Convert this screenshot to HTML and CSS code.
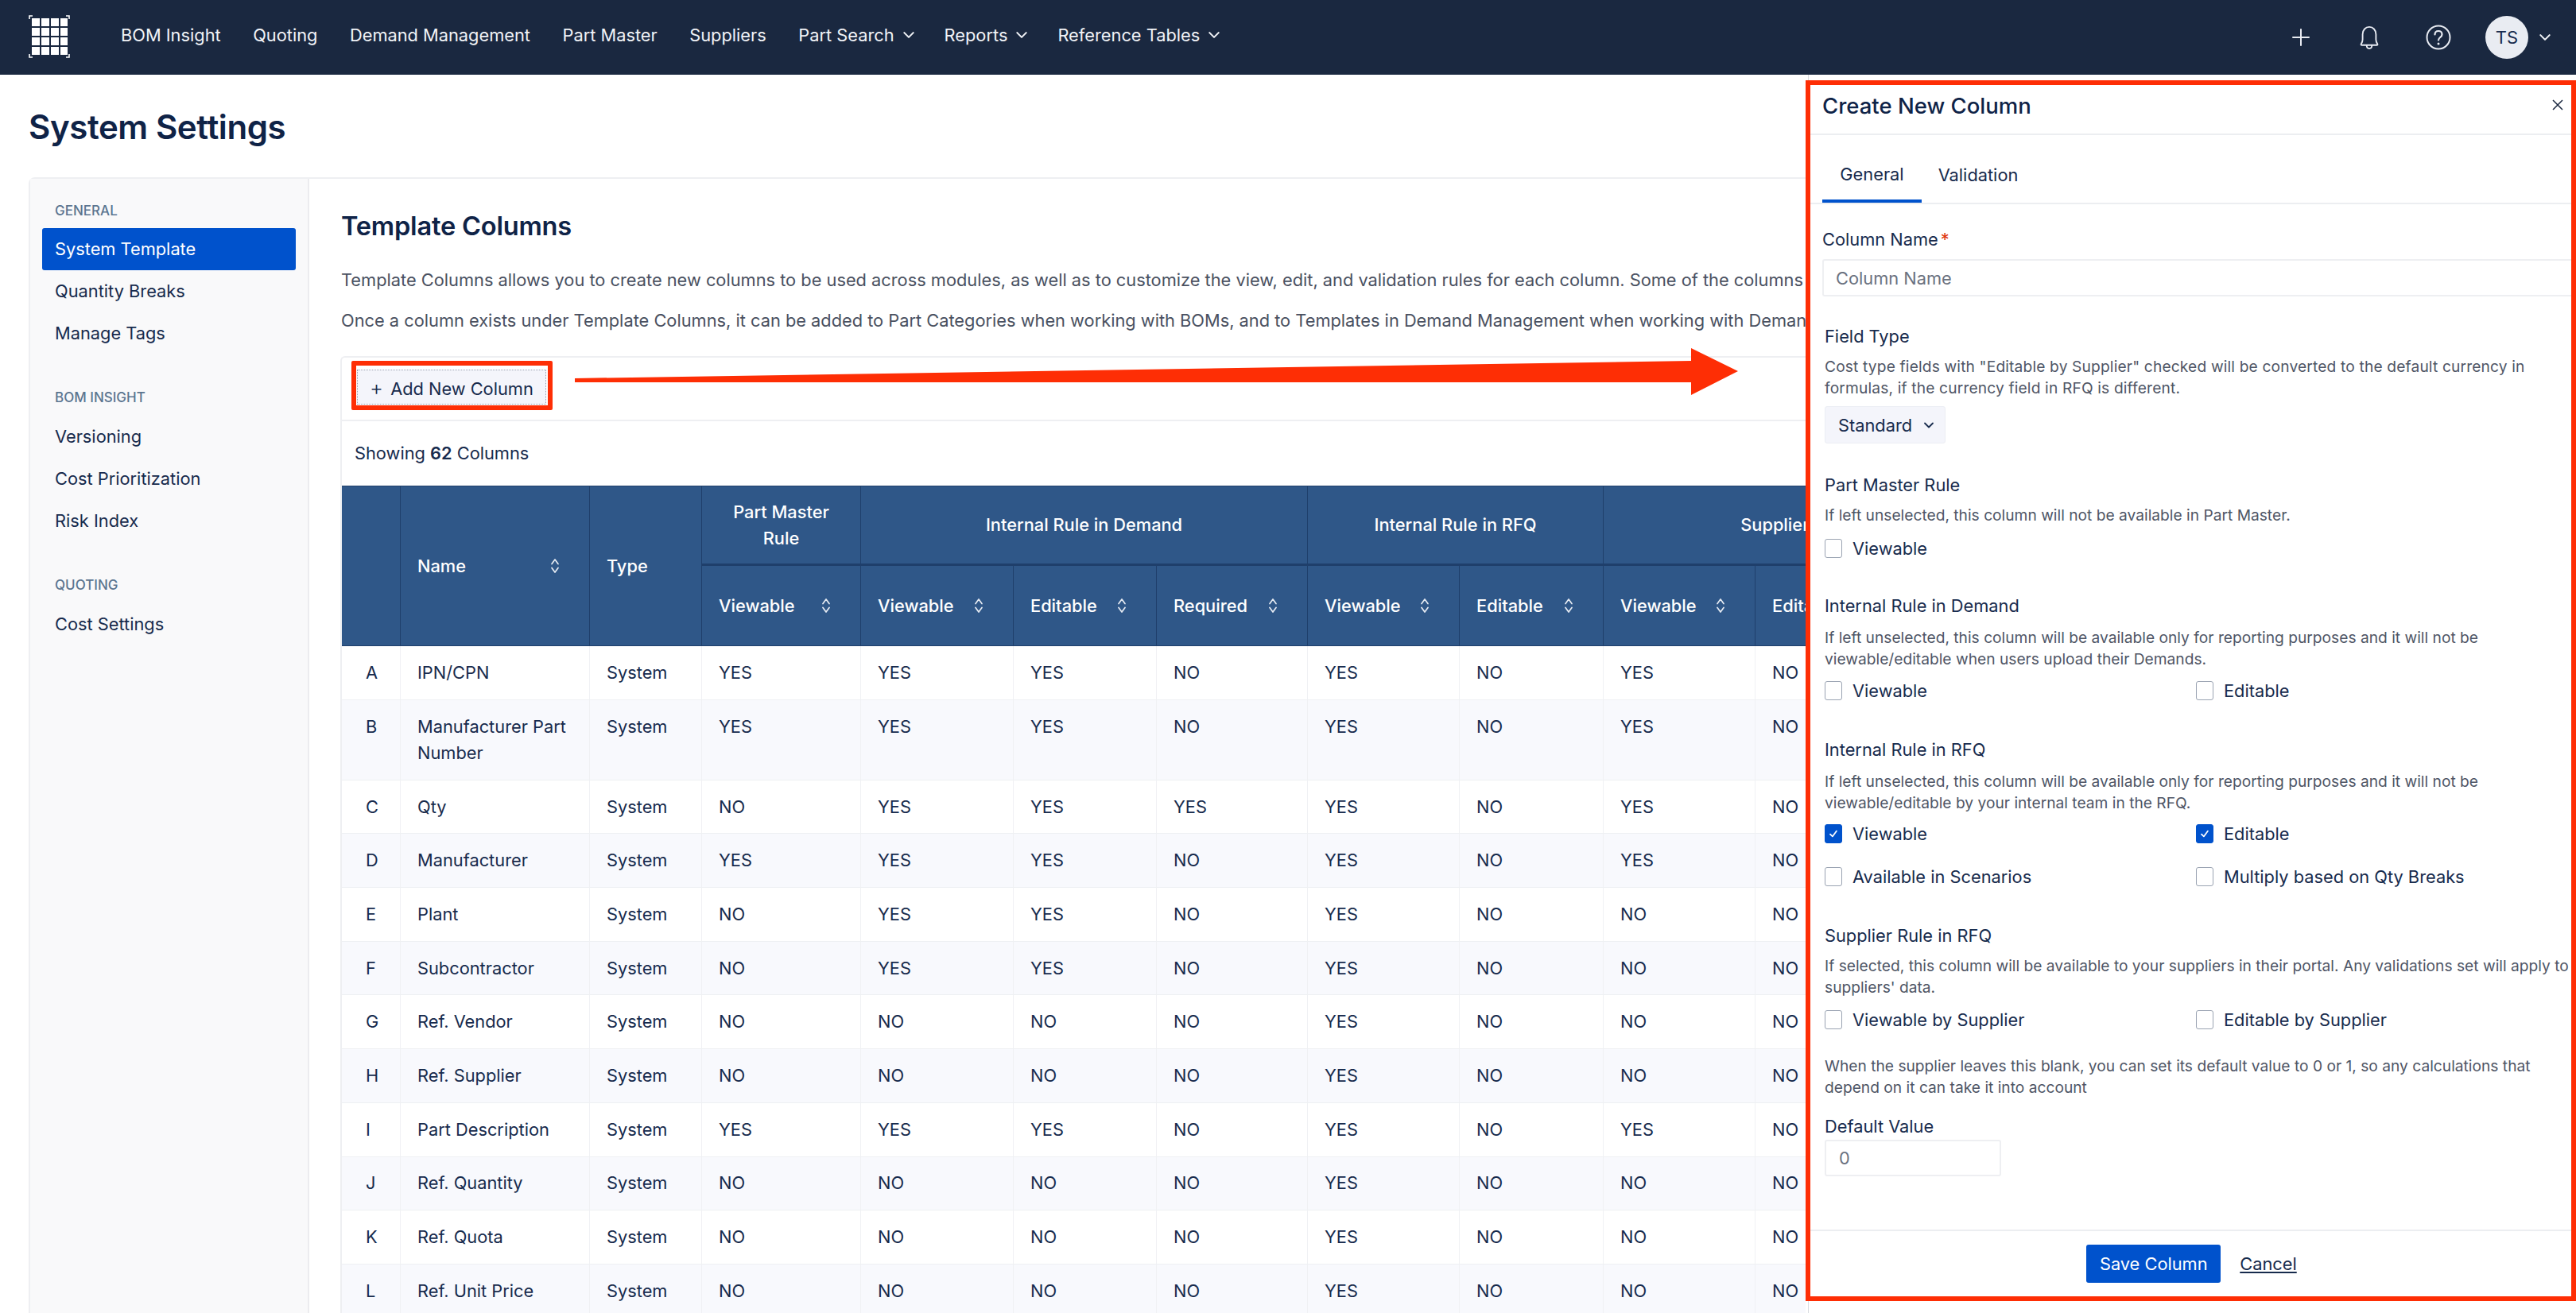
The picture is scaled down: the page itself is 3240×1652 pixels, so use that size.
FILE: index.html
```html
<!DOCTYPE html>
<html lang="en">
<head>
<meta charset="utf-8">
<title>System Settings</title>
<link rel="stylesheet" href="styles.css">
</head>
<body>
<svg class="defs" width="0" height="0" aria-hidden="true">
  <symbol id="sort" viewBox="0 0 14 20"><path d="M3 7.5 7 2l4 5.5M3 12.5 7 18l4-5.5" fill="none" stroke="currentColor" stroke-width="1.7" stroke-linecap="round" stroke-linejoin="round"/></symbol>
  <symbol id="chev" viewBox="0 0 14 10"><path d="M2 2.5 7 7.5l5-5" fill="none" stroke="currentColor" stroke-width="1.8" stroke-linecap="round" stroke-linejoin="round"/></symbol>
  <symbol id="tick" viewBox="0 0 14 14"><path d="M3.5 7.5 6 10l4.5-6" fill="none" stroke="#fff" stroke-width="1.5" stroke-linecap="round" stroke-linejoin="round"/></symbol>
</svg>
<header class="nav">
  <svg class="logo" viewBox="0 0 52 54" aria-label="logo">
    <path d="M1 5V1h4M47 1h4v4M1 49v4h4M47 53h4v-4" fill="none" stroke="#fff" stroke-width="1.6"/>
    <g fill="#fff">
      <rect x="4" y="4" width="10" height="10"/><rect x="16" y="4" width="10" height="10"/><rect x="28" y="4" width="10" height="10"/><rect x="40" y="4" width="9" height="10"/>
      <rect x="4" y="16" width="10" height="10"/><rect x="16" y="16" width="10" height="10"/><rect x="28" y="16" width="10" height="10"/><rect x="40" y="16" width="9" height="10"/>
      <rect x="4" y="28" width="10" height="10"/><rect x="16" y="28" width="10" height="10"/><rect x="28" y="28" width="10" height="10"/><rect x="40" y="28" width="9" height="10"/>
      <rect x="4" y="40" width="10" height="10"/><rect x="16" y="40" width="10" height="10"/><rect x="28" y="40" width="10" height="10"/><rect x="40" y="40" width="9" height="10"/>
    </g>
  </svg>
  <nav class="nav-links">
    <a>BOM Insight</a><a>Quoting</a><a>Demand Management</a><a>Part Master</a><a>Suppliers</a>
    <a class="has-chev">Part Search <svg class="chev"><use href="#chev"/></svg></a>
    <a class="has-chev">Reports <svg class="chev"><use href="#chev"/></svg></a>
    <a class="has-chev">Reference Tables <svg class="chev"><use href="#chev"/></svg></a>
  </nav>
  <div class="nav-right">
    <svg class="nav-ico" viewBox="0 0 24 24"><path d="M12 2v20M2 12h20" fill="none" stroke="#e8ebf2" stroke-width="2" stroke-linecap="round"/></svg>
    <svg class="nav-ico ico-bell" viewBox="0 0 30 32"><path d="M4 25c1.500-2 2-3 2-6v-7c0-6 4-10 9-10s9 4 9 10v7c0 3 .5 4 2 6 .5 1 0 1.500-1 1.500H5c-1 0-1.500-.5-1-1.500ZM11.500 27c0 2.500 1.500 4 3.500 4s3.500-1.500 3.500-4" fill="none" stroke="#e8ebf2" stroke-width="2"/></svg>
    <svg class="nav-ico ico-help" viewBox="0 0 32 32"><circle cx="16" cy="16" r="14.500" fill="none" stroke="#e8ebf2" stroke-width="2"/><path d="M11.500 12.500c0-3 2-4.500 4.500-4.500s4.500 1.700 4.500 4.300c0 3.700-4.500 3.700-4.500 7.200" fill="none" stroke="#e8ebf2" stroke-width="2.200" stroke-linecap="round"/><circle cx="16" cy="24" r="1.500" fill="#e8ebf2"/></svg>
    <div class="avatar-wrap">
      <span class="avatar">TS</span>
      <svg class="chev avatar-chev"><use href="#chev"/></svg>
    </div>
  </div>
</header>

<main class="page">
  <h1 class="page-title">System Settings</h1>
  <div class="panel">
    <aside class="side">
      <h6 class="side-h">GENERAL</h6>
      <a class="side-a active">System Template</a>
      <a class="side-a">Quantity Breaks</a>
      <a class="side-a">Manage Tags</a>
      <h6 class="side-h next">BOM INSIGHT</h6>
      <a class="side-a">Versioning</a>
      <a class="side-a">Cost Prioritization</a>
      <a class="side-a">Risk Index</a>
      <h6 class="side-h next">QUOTING</h6>
      <a class="side-a">Cost Settings</a>
    </aside>
    <section class="content">
      <h2 class="content-title">Template Columns</h2>
      <p class="lead">Template Columns allows you to create new columns to be used across modules, as well as to customize the view, edit, and validation rules for each column. Some of the columns</p>
      <p class="lead second">Once a column exists under Template Columns, it can be added to Part Categories when working with BOMs, and to Templates in Demand Management when working with Demands.</p>
      <div class="card">
        <div class="toolbar"><button class="add-btn"><span class="plus">+</span> Add New Column</button></div>
        <div class="showing">Showing <b>62</b> Columns</div>
        <table class="grid">
          <colgroup>
            <col class="c-idx"><col class="c-name"><col class="c-type"><col class="c-pm"><col class="c-dv"><col class="c-de"><col class="c-dr"><col class="c-rv"><col class="c-re"><col class="c-sv"><col class="c-se">
          </colgroup>
          <thead>
            <tr>
              <th rowspan="2"></th>
              <th rowspan="2"><span class="th-s">Name<svg class="sort"><use href="#sort"/></svg></span></th>
              <th rowspan="2"><span class="th-s">Type</span></th>
              <th class="grp">Part Master<br>Rule</th>
              <th class="grp" colspan="3">Internal Rule in Demand</th>
              <th class="grp" colspan="2">Internal Rule in RFQ</th>
              <th class="grp" colspan="2">Supplier Rule in RFQ</th>
            </tr>
            <tr class="sub">
              <th><span class="th-s">Viewable<svg class="sort"><use href="#sort"/></svg></span></th>
              <th><span class="th-s">Viewable<svg class="sort"><use href="#sort"/></svg></span></th>
              <th><span class="th-s">Editable<svg class="sort"><use href="#sort"/></svg></span></th>
              <th><span class="th-s">Required<svg class="sort"><use href="#sort"/></svg></span></th>
              <th><span class="th-s">Viewable<svg class="sort"><use href="#sort"/></svg></span></th>
              <th><span class="th-s">Editable<svg class="sort"><use href="#sort"/></svg></span></th>
              <th><span class="th-s">Viewable<svg class="sort"><use href="#sort"/></svg></span></th>
              <th><span class="th-s">Editable</span></th>
            </tr>
          </thead>
          <tbody>
            <tr><td class="idx">A</td><td>IPN/CPN</td><td>System</td><td>YES</td><td>YES</td><td>YES</td><td>NO</td><td>YES</td><td>NO</td><td>YES</td><td>NO</td></tr>
            <tr class="tall"><td class="idx">B</td><td>Manufacturer Part Number</td><td>System</td><td>YES</td><td>YES</td><td>YES</td><td>NO</td><td>YES</td><td>NO</td><td>YES</td><td>NO</td></tr>
            <tr><td class="idx">C</td><td>Qty</td><td>System</td><td>NO</td><td>YES</td><td>YES</td><td>YES</td><td>YES</td><td>NO</td><td>YES</td><td>NO</td></tr>
            <tr><td class="idx">D</td><td>Manufacturer</td><td>System</td><td>YES</td><td>YES</td><td>YES</td><td>NO</td><td>YES</td><td>NO</td><td>YES</td><td>NO</td></tr>
            <tr><td class="idx">E</td><td>Plant</td><td>System</td><td>NO</td><td>YES</td><td>YES</td><td>NO</td><td>YES</td><td>NO</td><td>NO</td><td>NO</td></tr>
            <tr><td class="idx">F</td><td>Subcontractor</td><td>System</td><td>NO</td><td>YES</td><td>YES</td><td>NO</td><td>YES</td><td>NO</td><td>NO</td><td>NO</td></tr>
            <tr><td class="idx">G</td><td>Ref. Vendor</td><td>System</td><td>NO</td><td>NO</td><td>NO</td><td>NO</td><td>YES</td><td>NO</td><td>NO</td><td>NO</td></tr>
            <tr><td class="idx">H</td><td>Ref. Supplier</td><td>System</td><td>NO</td><td>NO</td><td>NO</td><td>NO</td><td>YES</td><td>NO</td><td>NO</td><td>NO</td></tr>
            <tr><td class="idx">I</td><td>Part Description</td><td>System</td><td>YES</td><td>YES</td><td>YES</td><td>NO</td><td>YES</td><td>NO</td><td>YES</td><td>NO</td></tr>
            <tr><td class="idx">J</td><td>Ref. Quantity</td><td>System</td><td>NO</td><td>NO</td><td>NO</td><td>NO</td><td>YES</td><td>NO</td><td>NO</td><td>NO</td></tr>
            <tr><td class="idx">K</td><td>Ref. Quota</td><td>System</td><td>NO</td><td>NO</td><td>NO</td><td>NO</td><td>YES</td><td>NO</td><td>NO</td><td>NO</td></tr>
            <tr><td class="idx">L</td><td>Ref. Unit Price</td><td>System</td><td>NO</td><td>NO</td><td>NO</td><td>NO</td><td>YES</td><td>NO</td><td>NO</td><td>NO</td></tr>
          </tbody>
        </table>
      </div>
    </section>
  </div>
</main>

<div class="mark-btn"></div>
<svg class="mark-arrow" viewBox="0 0 1470 70"><polygon points="0,43 0,38 1404,16 1404,0 1463,29 1404,59 1404,43" fill="#fe2e05"/></svg>

<div class="drawer-edge"></div>
<aside class="drawer">
  <div class="d-head"><h3 class="d-title">Create New Column</h3><svg class="d-close" viewBox="0 0 14 14"><path d="M1 1l12 12M13 1 1 13" fill="none" stroke="#1a2840" stroke-width="1.500"/></svg></div>
  <div class="tabs"><a class="tab on">General</a><a class="tab">Validation</a></div>
  <div class="d-body">
    <label class="lbl">Column Name<span class="req">*</span></label>
    <div class="inp">Column Name</div>

    <div class="sec sec-type">
      <div class="sec-h">Field Type</div>
      <p class="help">Cost type fields with "Editable by Supplier" checked will be converted to the default currency in formulas, if the currency field in RFQ is different.</p>
      <div class="sel">Standard <svg class="chev sel-chev"><use href="#chev"/></svg></div>
    </div>

    <div class="sec s-pm">
      <div class="sec-h">Part Master Rule</div>
      <p class="help">If left unselected, this column will not be available in Part Master.</p>
      <div class="checks"><div class="ck"><i class="box"></i>Viewable</div></div>
    </div>

    <div class="sec s-dem">
      <div class="sec-h">Internal Rule in Demand</div>
      <p class="help">If left unselected, this column will be available only for reporting purposes and it will not be viewable/editable when users upload their Demands.</p>
      <div class="checks"><div class="ck"><i class="box"></i>Viewable</div><div class="ck"><i class="box"></i>Editable</div></div>
    </div>

    <div class="sec s-rfq">
      <div class="sec-h">Internal Rule in RFQ</div>
      <p class="help">If left unselected, this column will be available only for reporting purposes and it will not be viewable/editable by your internal team in the RFQ.</p>
      <div class="checks">
        <div class="ck"><i class="box on"><svg class="tick"><use href="#tick"/></svg></i>Viewable</div>
        <div class="ck"><i class="box on"><svg class="tick"><use href="#tick"/></svg></i>Editable</div>
        <div class="ck"><i class="box"></i>Available in Scenarios</div>
        <div class="ck"><i class="box"></i>Multiply based on Qty Breaks</div>
      </div>
    </div>

    <div class="sec s-sup">
      <div class="sec-h">Supplier Rule in RFQ</div>
      <p class="help wide">If selected, this column will be available to your suppliers in their portal. Any validations set will apply to suppliers' data.</p>
      <div class="checks"><div class="ck"><i class="box"></i>Viewable by Supplier</div><div class="ck"><i class="box"></i>Editable by Supplier</div></div>
      <p class="help note">When the supplier leaves this blank, you can set its default value to 0 or 1, so any calculations that depend on it can take it into account</p>
      <div class="sec-h dv">Default Value</div>
      <div class="inp small">0</div>
    </div>
  </div>
  <div class="d-foot"><button class="save">Save Column</button><a class="cancel">Cancel</a></div>
</aside>
</body>
</html>
```
FILE: styles.css
```css
* { box-sizing: border-box; }
html, body { margin: 0; height: 100%; }
body {
  width: 3240px; height: 1652px; overflow: hidden; position: relative; background: #fff;
  font-family: Inter, "Liberation Sans", sans-serif; color: #172b4d; font-size: 21.8px;
}
.defs { position: absolute; }
h1, h2, h3, h6, p { margin: 0; }

/* nav */
.nav { height: 94px; background: #1a2840; display: flex; align-items: center; padding: 0 31px 0 36px; color: #f1f3f7; }
.logo { width: 52px; height: 54px; margin: 0 64px 3px 0; flex: none; }
.nav-links { display: flex; align-items: center; gap: 40.5px; font-size: 21.8px; white-space: nowrap; margin-bottom: 6px; }
.nav-links a { display: flex; align-items: center; gap: 10px; }
.nav-links a.has-chev { margin-right: -3.5px; }
.chev { width: 16px; height: 12px; }
.nav-right { margin-left: auto; display: flex; align-items: center; gap: 60px; }
.nav-ico { width: 24px; height: 24px; }
.ico-bell { width: 28px; height: 32px; }
.ico-help { width: 32px; height: 32px; margin-left: -3px; }
.avatar-wrap { display: flex; align-items: center; gap: 13px; margin-left: -17px; }
.avatar { width: 54px; height: 54px; border-radius: 50%; background: #e9ecf2; color: #172b4d; display: flex; align-items: center; justify-content: center; font-size: 22px; }

/* page */
.page { padding: 0 0 0 36px; }
.page-title { font-size: 42px; font-weight: 600; line-height: 50px; padding-top: 41px; height: 129px; color: #0f2347; letter-spacing: -0.4px; }
.panel { display: flex; width: 2235px; border: 2px solid #eeeff2; border-right: 0; border-radius: 8px 0 0 0; height: 1500px; }
.side { width: 351px; flex: none; background: #f9f9fa; border-right: 2px solid #ececef; padding: 28px 15px 0 15px; }
.side-h { font-size: 17px; font-weight: 500; color: #5b7590; line-height: 24px; padding-left: 16px; margin-bottom: 10px; }
.side-h.next { margin-top: 43px; margin-bottom: 11px; }
.side-a { display: flex; align-items: center; height: 52.7px; padding-left: 16px; border-radius: 3px; color: #172b4d; }
.side-a.active { background: #0052cc; color: #fff; }
.content { flex: 1; padding: 37px 0 0 40px; min-width: 0; overflow: hidden; }
.content-title { font-size: 32.6px; font-weight: 600; line-height: 44px; color: #0f2347; letter-spacing: -0.2px; }
.lead { font-size: 21.8px; line-height: 30px; color: #4a5161; white-space: nowrap; margin-top: 31px; }
.lead.second { margin-top: 21px; }

.card { margin: 30px 0 0 -1px; border: 2px solid #eeeff2; border-right: 0; border-bottom: 0; border-radius: 6px 0 0 0; }
.toolbar { height: 80px; border-bottom: 2px solid #eeeff2; padding: 15px 0 0 19px; display: flex; }
.add-btn { height: 44px; width: 238px; border: 1px dotted #98a0b0; background: #f4f5fb; font: inherit; color: #172b4d; text-align: left; padding: 0 0 0 15px; white-space: nowrap; }
.plus { font-size: 26px; font-weight: 300; margin-right: 3px; }
.showing { height: 81px; padding-left: 16px; line-height: 81px; white-space: nowrap; }
.showing b { font-weight: 600; }

.grid { border-collapse: separate; border-spacing: 0; table-layout: fixed; width: 2144px; }
.c-idx { width: 74px; } .c-name { width: 238px; } .c-type { width: 141px; } .c-pm { width: 200px; }
.c-dv { width: 192px; } .c-de { width: 180px; } .c-dr { width: 190px; } .c-rv { width: 191px; }
.c-re { width: 181px; } .c-sv { width: 191px; } .c-se { width: 366px; }
.grid th { background: #2f5788; color: #fff; font-weight: 500; border-right: 1px solid #1f3f6b; text-align: left; padding: 0 36px 0 21px; vertical-align: middle; font-size: 21.8px; white-space: nowrap; }
.grid thead tr:first-child th { height: 101px; border-top: 1px solid #1f3f6b; }
.grid th.grp { text-align: center; border-bottom: 3px solid #1f3f6b; line-height: 33px; padding: 0; }
.grid tr.sub th { height: 101px; border-bottom: 1px solid #1f3f6b; }
.grid thead th[rowspan] { border-bottom: 1px solid #1f3f6b; }
.th-s { display: flex; align-items: center; justify-content: space-between; }
.sort { width: 14px; height: 20px; color: #e6ebf3; flex: none; }
.grid td { height: 67.7px; padding: 0 21px; border-right: 1px solid #f0f1f4; border-bottom: 1px solid #eef0f3; line-height: 33px; color: #172b4d; }
.grid tbody tr:nth-child(even) td { background: #f8f9fd; }
.grid td.idx { padding: 0; padding-left: 30px; }
.grid tr.tall td { height: 101px; vertical-align: top; padding-top: 17px; }

/* annotations */
.mark-btn { position: absolute; left: 442px; top: 454px; width: 253px; height: 62px; border: 6px solid #fe2e05; border-radius: 2px; }
.mark-arrow { position: absolute; left: 723px; top: 438px; width: 1470px; height: 70px; }

/* drawer */
.drawer-edge { position: absolute; left: 2274px; top: 94px; width: 1px; height: 1558px; background: #d9dbe0; }
.drawer { position: absolute; left: 2271px; top: 101px; width: 969px; height: 1536px; background: #fff; border: 6px solid #fe2e05; display: flex; flex-direction: column; }
.d-head { height: 63px; border-bottom: 2px solid #eceef1; display: flex; justify-content: space-between; padding: 8px 10px 0 15px; flex: none; }
.d-title { font-size: 27.5px; font-weight: 500; line-height: 36px; color: #0f2347; }
.d-close { width: 14px; height: 14px; margin-top: 10px; }
.tabs { height: 87px; border-bottom: 2px solid #eceef1; padding-left: 15px; display: flex; flex: none; }
.tab { display: flex; align-items: center; justify-content: center; width: 125px; height: 85px; padding-top: 14px; }
.tab.on { border-bottom: 4px solid #0052cc; padding-top: 16px; }
.tab + .tab { width: 120px; margin-left: 11px; }
.d-body { flex: 1; padding: 26px 0 0 15px; min-height: 0; }
.lbl { display: block; line-height: 36px; color: #172b4d; }
.req { color: #de350b; margin-left: 3px; }
.inp { height: 47px; margin-top: 7px; border: 2px solid #eeeff2; border-right: 0; border-radius: 3px 0 0 3px; padding-left: 15px; display: flex; align-items: center; color: #6b7280; }
.inp.small { width: 222px; border-right: 2px solid #eeeff2; border-radius: 3px; margin-top: 0; padding-left: 16px; height: 46px; }
.sec { padding-left: 3px; }
.sec-h { line-height: 30px; color: #172b4d; }
.help { font-size: 19.2px; line-height: 27px; color: #4f5666; margin-top: 10px; padding-right: 30px; }
.sec-type .help { letter-spacing: .15px; }
.help.wide { padding-right: 0; }
.sec-type { margin-top: 35px; }
.sel { margin-top: 9px; width: 152px; height: 47px; background: #f4f5fb; border: 1px solid #eceef4; border-radius: 3px; display: flex; align-items: center; padding-left: 16px; gap: 14px; }
.sel-chev { width: 14px; height: 10px; }
.s-pm { margin-top: 37px; }
.s-dem { margin-top: 43px; }
.s-dem .help, .s-rfq .help { margin-top: 12px; }
.s-rfq { margin-top: 45px; }
.s-sup { margin-top: 45px; }
.checks { display: grid; grid-template-columns: 467px 1fr; row-gap: 25px; margin-top: 11px; }
.s-pm .checks { margin-top: 13px; }
.s-rfq .checks { margin-top: 10px; }
.s-sup .checks { margin-top: 12px; }
.ck { display: flex; align-items: center; gap: 13px; height: 29px; color: #172b4d; }
.box { width: 22px; height: 24px; border: 1px solid #9aa3b2; border-radius: 3px; background: #fff; flex: none; display: flex; align-items: center; justify-content: center; }
.box.on { background: #0052cc; border-color: #0052cc; }
.tick { width: 16px; height: 16px; }
.help.note { margin-top: 31px; }
.dv { margin-top: 20px; margin-bottom: 2px; }
.d-foot { height: 84px; border-top: 2px solid #eceef1; flex: none; display: flex; justify-content: center; align-items: center; gap: 24px; padding-left: 2px; }
.save { width: 169px; height: 48px; background: #0052cc; color: #fff; border: 0; border-radius: 3px; font: inherit; }
.cancel { text-decoration: underline; color: #172b4d; }
```
